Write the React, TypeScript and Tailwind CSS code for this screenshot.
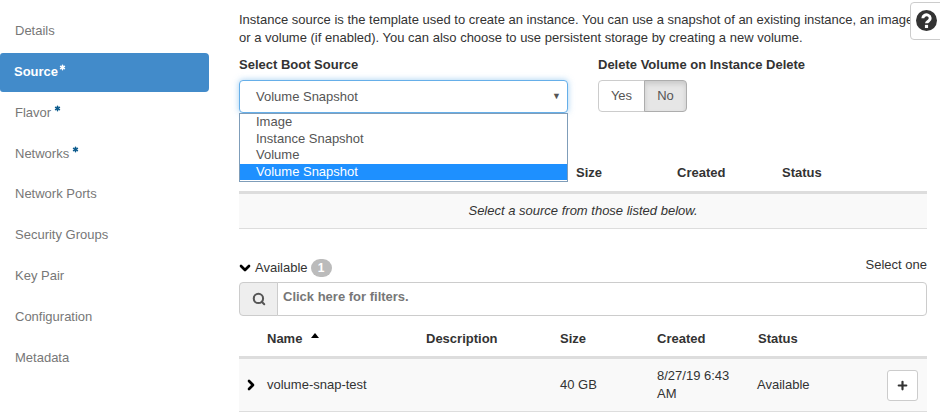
import React from 'react';
import { Asterisk, ChevronDown, ChevronRight, Plus, Search } from 'lucide-react';

const steps = [
  { label: 'Details', row: 'h-[41px]' },
  { label: 'Source', required: true, active: true },
  { label: 'Flavor', required: true, row: 'h-[41px]' },
  { label: 'Networks', required: true, row: 'h-[41px]' },
  { label: 'Network Ports', row: 'h-[40px]' },
  { label: 'Security Groups', row: 'h-[41px]' },
  { label: 'Key Pair', row: 'h-[41px]' },
  { label: 'Configuration', row: 'h-[41px]' },
  { label: 'Metadata', row: 'h-[41px]' },
];

const options = [
  { label: 'Image', row: 'h-[17px] pl-[16px]' },
  { label: 'Instance Snapshot', row: 'h-[16px] pl-[16px]' },
  { label: 'Volume', row: 'h-[17px] pl-[16px]' },
  { label: 'Volume Snapshot', row: 'h-[16px] bg-[#1e90ff] pl-[16px] text-white' },
];

function SideMenu() {
  return (
    <aside className="w-[209px] shrink-0 pt-[10px]">
      <ul>
        {steps.map((step) => (
          <li
            key={step.label}
            className={
              step.active
                ? 'mt-[2px] flex h-[39px] items-center rounded-r-[4px] rounded-l-[3px] bg-[#428bca] pb-[2px] pl-[14px] font-bold text-white'
                : step.row + ' flex items-center pl-[15px] text-[#777]'
            }
          >
            {step.label}
            {step.required && (
              <Asterisk
                size={9}
                strokeWidth={4}
                className={step.active ? 'mb-[8px] text-white' : 'mb-[9px] ml-[2px] text-[#0b5a8c]'}
              />
            )}
          </li>
        ))}
      </ul>
    </aside>
  );
}

function BootSource() {
  return (
    <div className="flex">
      <div className="relative w-[329px]">
        <div className="mb-[6px] h-[18px] font-bold leading-[18px] text-[#333]">Select Boot Source</div>
        <div className="flex h-[33px] items-center justify-between rounded-[4px] border border-[#66afe9] bg-white pl-[16px] pr-[6px] text-[#555] shadow-[0_0_6px_rgba(102,175,233,0.6)]">
          Volume Snapshot
          <span className="text-[9px] text-[#555]">▼</span>
        </div>
        <ul className="absolute left-0 top-[57px] z-10 h-[69px] w-[329px] border border-[#7f9db9] bg-white text-[#555]">
          {options.map((option) => (
            <li key={option.label} className={option.row + ' leading-[15px]'}>
              {option.label}
            </li>
          ))}
        </ul>
      </div>
      <div className="ml-[30px]">
        <div className="mb-[6px] h-[18px] font-bold leading-[18px] text-[#333]">Delete Volume on Instance Delete</div>
        <div className="flex h-[32px] w-[89px]">
          <div className="flex w-[47px] items-center justify-center rounded-l-[4px] border border-[#ccc] bg-white text-[#555]">Yes</div>
          <div className="-ml-px flex flex-1 items-center justify-center rounded-r-[4px] border border-[#adadad] bg-[#e6e6e6] text-[#555] shadow-[inset_0_3px_5px_rgba(0,0,0,0.125)]">No</div>
        </div>
      </div>
    </div>
  );
}

function AllocatedTable() {
  return (
    <div className="mt-[46px]">
      <div className="grid h-[32px] grid-cols-[337px_101px_105px_1fr] items-center pb-[4px] font-bold text-[#333]">
        <span />
        <span>Size</span>
        <span>Created</span>
        <span>Status</span>
      </div>
      <div className="flex h-[38px] items-center justify-center border-t-[3px] border-b border-t-[#ddd] border-b-[#ddd] bg-[#f9f9f9] italic text-[#333]">
        Select a source from those listed below.
      </div>
    </div>
  );
}

function AvailableTable() {
  return (
    <div className="mt-[28px]">
      <div className="flex h-[22px] items-center justify-between">
        <div className="flex items-center text-[#333]">
          <ChevronDown size={16} strokeWidth={4} className="-ml-[2px] mr-[2px] text-black" />
          Available
          <span className="ml-[3px] flex h-[18px] w-[21px] items-center justify-center rounded-full bg-[#bbb] text-[12px] font-bold text-white">1</span>
        </div>
        <span className="-mt-[6px] text-[#333]">Select one</span>
      </div>
      <div className="mt-[3px] flex h-[34px]">
        <div className="flex w-[39px] items-center justify-center rounded-l-[4px] border border-[#ccc] bg-[#eee] text-[#555]">
          <Search size={14} strokeWidth={3.5} />
        </div>
        <div className="-ml-px flex flex-1 rounded-r-[4px] border border-[#ccc] bg-white pl-[5px] pt-[5px] font-bold leading-[18px] text-[#777]">
          Click here for filters.
        </div>
      </div>
      <div className="mt-[8px] grid h-[32px] grid-cols-[28px_159px_134px_97px_101px_1fr] items-center pb-[3px] font-bold text-[#333]">
        <span />
        <span className="flex items-center">
          Name
          <span className="mb-[6px] ml-[9px] h-0 w-0 border-x-[4px] border-b-[5px] border-x-transparent border-b-black" />
        </span>
        <span>Description</span>
        <span>Size</span>
        <span>Created</span>
        <span>Status</span>
      </div>
      <div className="grid h-[56px] grid-cols-[28px_159px_134px_97px_101px_1fr] items-center border-t-[3px] border-b border-t-[#ddd] border-b-[#ddd] bg-[#f9f9f9] text-[#333]">
        <ChevronRight size={16} strokeWidth={4} className="ml-[4px] text-black" />
        <span>volume-snap-test</span>
        <span />
        <span>40 GB</span>
        <span className="max-w-[85px] leading-[18px]">8/27/19 6:43 AM</span>
        <div className="flex items-center justify-between pr-[9px]">
          <span className="-ml-px">Available</span>
          <button className="flex h-[31px] w-[31px] items-center justify-center rounded-[3px] border border-[#ccc] bg-white text-[#333]">
            <Plus size={13} strokeWidth={4} />
          </button>
        </div>
      </div>
    </div>
  );
}

export default function App() {
  return (
    <div className="relative flex h-[415px] w-[940px] overflow-hidden bg-white font-['Liberation_Sans',Arial,sans-serif] text-[13px]">
      <SideMenu />
      <main className="ml-[30px] w-[688px] pt-[11px]">
        <p className="mb-[9px] leading-[18px] text-[#333]">
          Instance source is the template used to create an instance. You can use a snapshot of an existing instance, an image or a volume (if enabled). You can also choose to use persistent storage by creating a new volume.
        </p>
        <BootSource />
        <AllocatedTable />
        <AvailableTable />
      </main>
      <button className="absolute right-[-4px] top-[2px] flex h-[38px] w-[34px] items-start justify-start rounded-[4px] border border-[#ccc] bg-white pl-[5px] pt-[7px]">
        <svg viewBox="0 0 24 24" className="h-[21px] w-[21px]">
          <circle cx="12" cy="12" r="12" fill="#333" />
          <path d="M7.8 9.4a4.2 3.8 0 1 1 6.6 3.1c-1.4 1-2.4 1.3-2.4 2.7" fill="none" stroke="#fff" strokeWidth="3.4" />
          <rect x="10.2" y="17" width="3.6" height="3.6" fill="#fff" />
        </svg>
      </button>
    </div>
  );
}
